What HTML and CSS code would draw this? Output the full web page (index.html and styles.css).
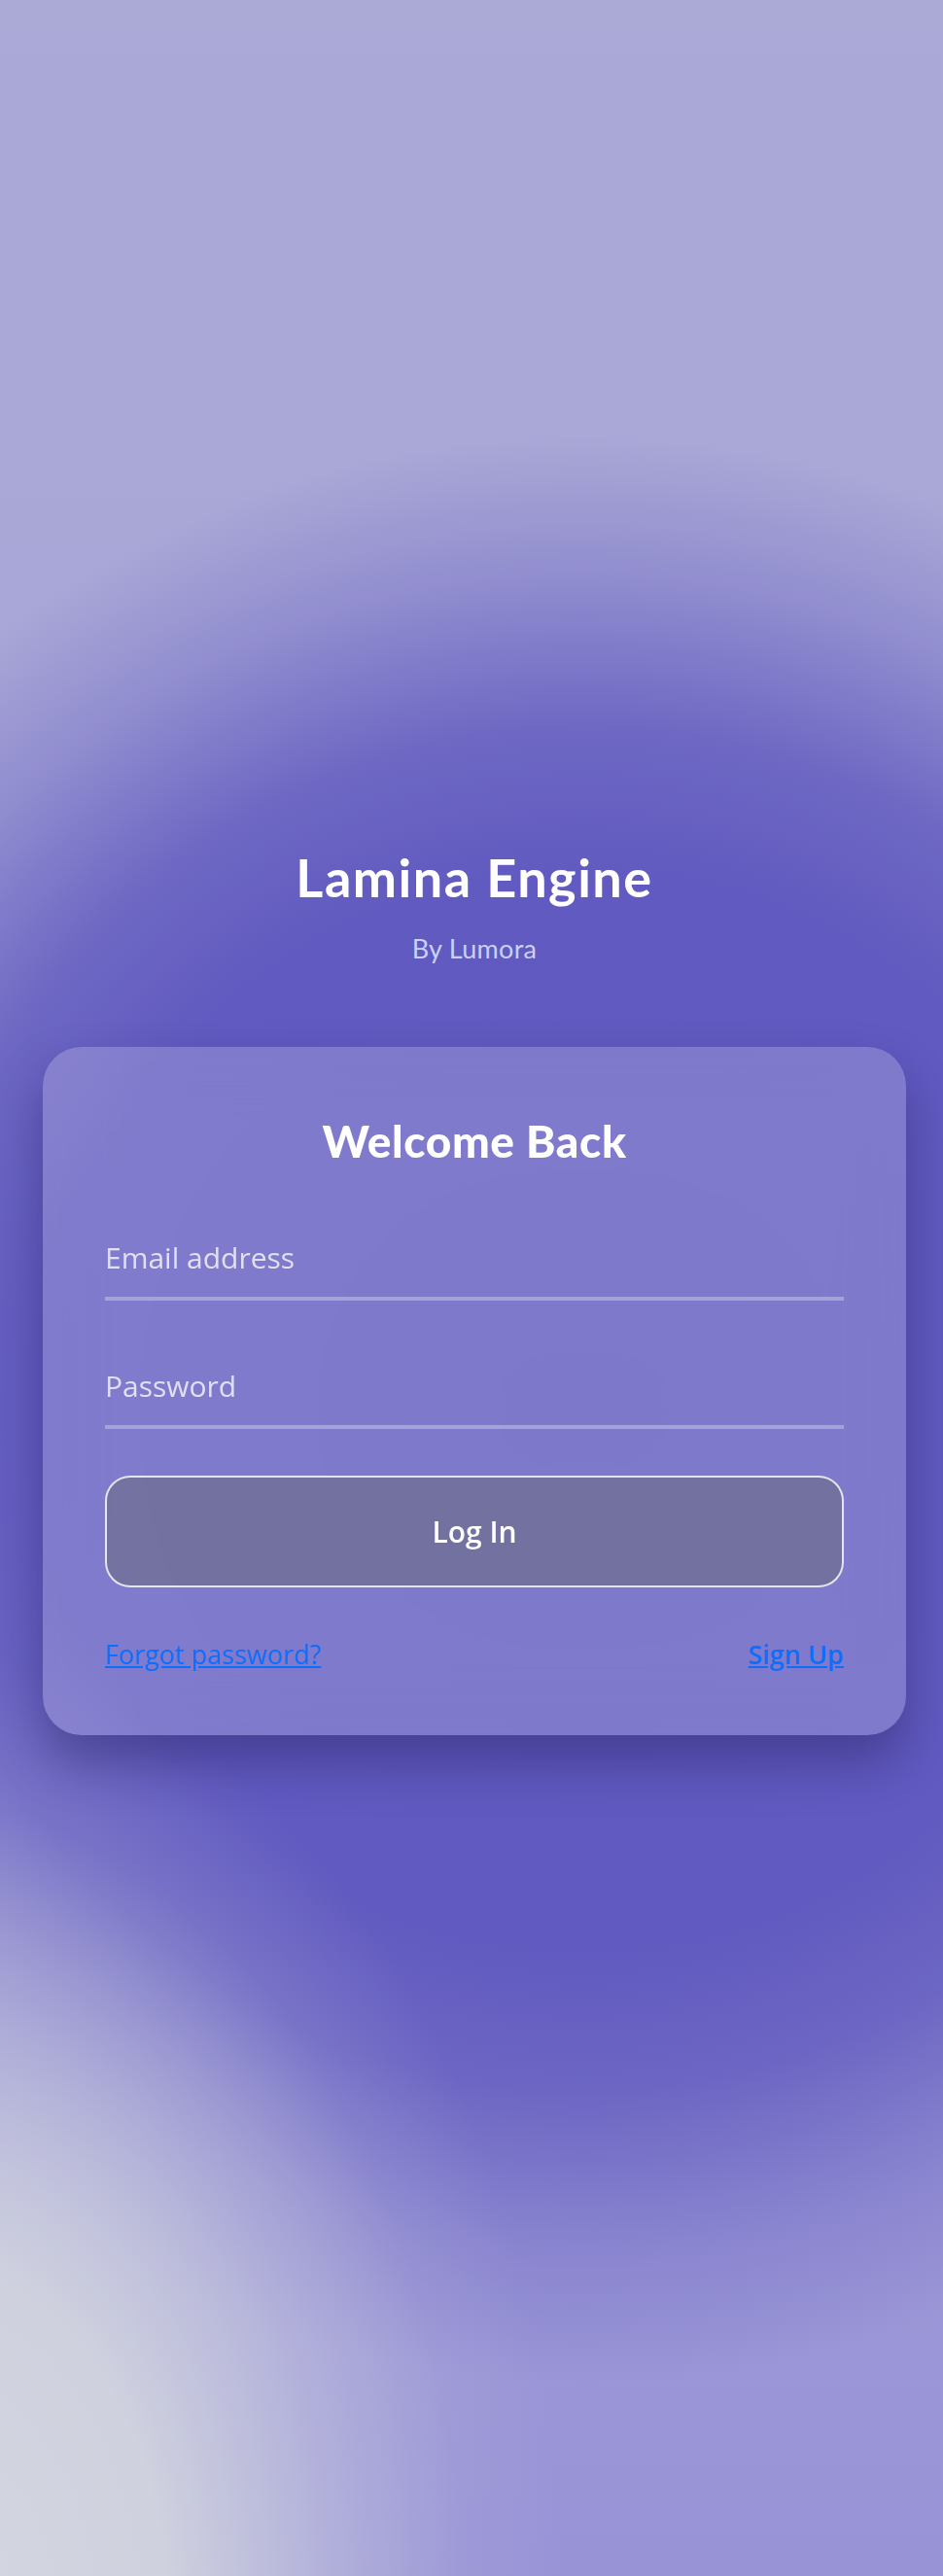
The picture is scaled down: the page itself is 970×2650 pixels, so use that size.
FILE: index.html
```html
<!DOCTYPE html>
<html lang="en">
<head>
<meta charset="utf-8">
<title>Lamina Engine – Log In</title>
<link rel="stylesheet" href="styles.css">
</head>
<body>
<main class="page">
  <header class="brand">
    <h1 class="brand-title">Lamina Engine</h1>
    <p class="brand-sub">By Lumora</p>
  </header>
  <section class="card">
    <h2 class="card-title">Welcome Back</h2>
    <form class="form">
      <input class="field" type="email" placeholder="Email address">
      <input class="field field-password" type="password" placeholder="Password">
      <button class="btn" type="button">Log In</button>
      <div class="links">
        <a href="#" class="link">Forgot password?</a>
        <a href="#" class="link link-strong">Sign Up</a>
      </div>
    </form>
  </section>
</main>
</body>
</html>
```

FILE: styles.css
```css
html {
  margin: 0;
  min-height: 2650px;
  background-color: #a9a7d6;
  background-image:
    radial-gradient(ellipse 640px 1000px at -60px 2700px, rgba(212,215,224,1) 0%, rgba(210,213,223,0.95) 36%, rgba(200,201,222,0.5) 64%, rgba(190,190,222,0.15) 84%, rgba(190,190,222,0) 100%),
    radial-gradient(ellipse 1000px 1000px at 600px 1450px, #5e57bf 0%, #615ac0 55%, rgba(100,93,192,0.85) 70%, rgba(110,104,196,0.4) 86%, rgba(120,115,200,0) 100%),
    linear-gradient(180deg, #aba9d6 0%, #a8a6d7 30%, #a29fd8 60%, #9893d6 100%);
  background-repeat: no-repeat;
}

body {
  margin: 0;
  min-height: 2650px;
}

.page {
  padding: 870px 38px 0 44px;
}

.brand {
  text-align: center;
}

.brand-title {
  margin: 0;
  font-family: Lato, "Open Sans", sans-serif;
  font-weight: 700;
  font-size: 54px;
  line-height: 65px;
  letter-spacing: 1.5px;
  color: #ffffff;
}

.brand-sub {
  margin: 25px 0 0;
  font-family: Lato, "Open Sans", sans-serif;
  font-weight: 400;
  font-size: 27px;
  line-height: 32px;
  letter-spacing: 0.3px;
  color: #cbd0fa;
}

.card {
  margin-top: 85px;
  padding: 69px 64px 65px;
  border-radius: 40px;
  background: rgba(255, 255, 255, 0.2);
  -webkit-backdrop-filter: blur(30px);
  backdrop-filter: blur(30px);
  box-shadow: 0 28px 50px rgba(30, 24, 80, 0.38);
}

.card-title {
  margin: 0;
  text-align: center;
  font-family: Lato, "Open Sans", sans-serif;
  font-weight: 900;
  font-size: 46px;
  line-height: 55px;
  letter-spacing: 0.6px;
  color: #ffffff;
}

.form {
  margin: 73px 0 0;
  display: flex;
  flex-direction: column;
}

.field {
  display: block;
  width: 100%;
  box-sizing: content-box;
  height: 40px;
  margin: 0;
  padding: 0 0 20px;
  border: 0;
  border-bottom: 4px solid rgba(255, 255, 255, 0.3);
  border-radius: 0;
  background: transparent;
  outline: none;
  font-family: "Open Sans", "Noto Sans", sans-serif;
  font-size: 30px;
  line-height: 40px;
  color: #ffffff;
}

.field::placeholder {
  color: rgba(255, 255, 255, 0.76);
  opacity: 1;
}

.field-password {
  margin-top: 68px;
}

.btn {
  margin-top: 48px;
  height: 115px;
  box-sizing: border-box;
  border: 2px solid rgba(255, 255, 255, 0.82);
  border-radius: 26px;
  background: rgba(104, 106, 116, 0.5);
  color: #ffffff;
  font-family: "Open Sans", "Noto Sans", sans-serif;
  font-weight: 600;
  font-size: 30px;
  cursor: pointer;
}

.links {
  margin-top: 50px;
  display: flex;
  justify-content: space-between;
  font-family: "Open Sans", "Noto Sans", sans-serif;
  font-size: 27px;
}

.link {
  color: #0d6efd;
  text-decoration: underline;
}

.link-strong {
  font-weight: 600;
}
```
